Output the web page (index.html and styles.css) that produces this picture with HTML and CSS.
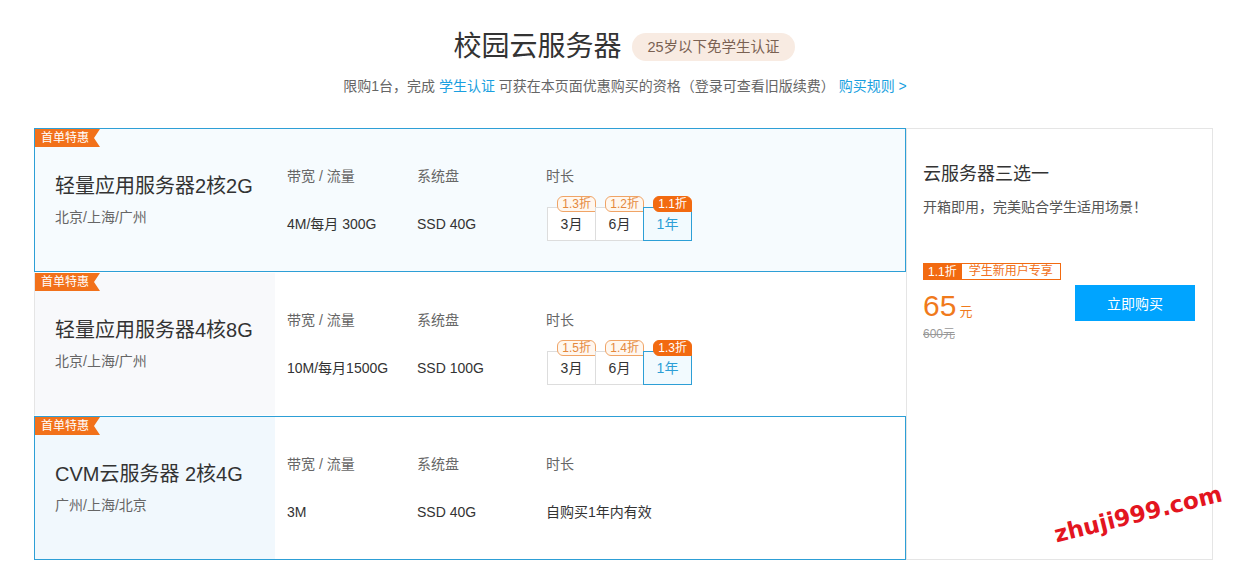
FILE: index.html
```html
<!DOCTYPE html>
<html lang="zh-CN">
<head>
<meta charset="utf-8">
<title>校园云服务器</title>
<link rel="stylesheet" href="styles.css">
</head>
<body>
<div class="header">
  <div class="title-row">
    <h1 class="title">校园云服务器</h1>
    <span class="pill">25岁以下免学生认证</span>
  </div>
  <p class="subtitle">限购1台，完成 <a class="link">学生认证</a> 可获在本页面优惠购买的资格（登录可查看旧版续费） <a class="link">购买规则 &gt;</a></p>
</div>

<div class="board">
  <div class="list">
    <div class="card active full">
      <span class="ribbon">首单特惠</span>
      <div class="card-left">
        <div class="name">轻量应用服务器2核2G</div>
        <div class="region">北京/上海/广州</div>
      </div>
      <div class="card-right">
        <div class="col col-bw">
          <div class="label">带宽 / 流量</div>
          <div class="value">4M/每月 300G</div>
        </div>
        <div class="col col-disk">
          <div class="label">系统盘</div>
          <div class="value">SSD 40G</div>
        </div>
        <div class="col col-dur">
          <div class="label">时长</div>
          <div class="durations">
            <div class="dur"><span class="off">1.3折</span>3月</div>
            <div class="dur"><span class="off">1.2折</span>6月</div>
            <div class="dur sel"><span class="off">1.1折</span>1年</div>
          </div>
        </div>
      </div>
    </div>

    <div class="card gray">
      <span class="ribbon">首单特惠</span>
      <div class="card-left">
        <div class="name">轻量应用服务器4核8G</div>
        <div class="region">北京/上海/广州</div>
      </div>
      <div class="card-right">
        <div class="col col-bw">
          <div class="label">带宽 / 流量</div>
          <div class="value">10M/每月1500G</div>
        </div>
        <div class="col col-disk">
          <div class="label">系统盘</div>
          <div class="value">SSD 100G</div>
        </div>
        <div class="col col-dur">
          <div class="label">时长</div>
          <div class="durations">
            <div class="dur"><span class="off">1.5折</span>3月</div>
            <div class="dur"><span class="off">1.4折</span>6月</div>
            <div class="dur sel"><span class="off">1.3折</span>1年</div>
          </div>
        </div>
      </div>
    </div>

    <div class="card active blue">
      <span class="ribbon">首单特惠</span>
      <div class="card-left">
        <div class="name">CVM云服务器 2核4G</div>
        <div class="region">广州/上海/北京</div>
      </div>
      <div class="card-right">
        <div class="col col-bw">
          <div class="label">带宽 / 流量</div>
          <div class="value">3M</div>
        </div>
        <div class="col col-disk">
          <div class="label">系统盘</div>
          <div class="value">SSD 40G</div>
        </div>
        <div class="col col-dur">
          <div class="label">时长</div>
          <div class="value">自购买1年内有效</div>
        </div>
      </div>
    </div>
  </div>

  <div class="panel">
    <div class="panel-title">云服务器三选一</div>
    <div class="panel-desc">开箱即用，完美贴合学生适用场景！</div>
    <div class="promo"><span class="promo-off">1.1折</span><span class="promo-txt">学生新用户专享</span></div>
    <div class="buy-row">
      <div class="prices">
        <div class="price"><span class="num">65</span><span class="unit">元</span></div>
        <div class="old">600元</div>
      </div>
      <button class="buy">立即购买</button>
    </div>
  </div>
</div>

<div class="watermark">zhuji999.com</div>
</body>
</html>
```

FILE: styles.css
```css
* { box-sizing: border-box; }
html, body { margin: 0; padding: 0; background: #fff; }
body {
  font-family: "Liberation Sans", "Noto Sans CJK SC", sans-serif;
  color: #333;
  width: 1256px;
  height: 574px;
  overflow: hidden;
  position: relative;
}

.header { width: 1248px; padding-top: 27px; text-align: center; }
.title-row { display: flex; justify-content: center; align-items: center; gap: 11px; height: 40px; }
.title { margin: 0; font-size: 28px; font-weight: 400; line-height: 40px; color: #333; }
.pill {
  display: inline-block; height: 28px; line-height: 28px; padding: 0 15px;
  background: #f8ebe2; color: #7a6152; border-radius: 14px; font-size: 14.5px;
}
.subtitle { margin: 9px 0 0; padding-left: 2px; font-size: 14px; line-height: 20px; color: #666; }
.link { color: #1a9fe0; text-decoration: none; }

.board { display: flex; margin: 32px 0 0 34px; width: 1179px; height: 432px; }
.list { width: 872px; display: flex; flex-direction: column; }

.card {
  position: relative;
  display: flex;
  height: 144px;
  border: 1px solid transparent;
  border-left-color: #e5e5e5;
  background: #fff;
}
.card.active { border-color: #2d9fd6; }
.card.full { background: #f6fbfe; }
.card.gray .card-left { background: #f8f9fb; }
.card.blue .card-left { background: #f1f8fd; }

.ribbon {
  position: absolute; left: 0; top: 0;
  height: 18px; line-height: 18px; width: 65px;
  padding-left: 6px;
  font-size: 12px; color: #fff; background: #f2711a;
  clip-path: polygon(0 0, 100% 0, calc(100% - 6px) 50%, 100% 100%, 0 100%);
}

.card-left { width: 240px; padding: 43px 0 0 20px; }
.name { font-size: 20px; line-height: 28px; color: #333; }
.region { margin-top: 7px; font-size: 14px; line-height: 20px; color: #666; }

.card-right { display: flex; flex: 1; padding: 37px 0 0 12px; }
.col { display: flex; flex-direction: column; }
.col-bw { width: 130px; }
.col-disk { width: 129px; }
.col-dur { flex: 1; }
.label { font-size: 14px; line-height: 20px; color: #666; }
.value { margin-top: 28px; font-size: 14px; line-height: 20px; color: #333; }

.durations { display: flex; margin-top: 21px; padding-left: 2px; }
.dur {
  position: relative;
  width: 49px; height: 34px;
  margin-left: -1px;
  border: 1px solid #ddd; background: #fff;
  font-size: 14px; line-height: 32px; text-align: center; color: #333;
}
.dur.sel { border-color: #2d9fd6; background: #f2fafe; color: #2d9fd6; z-index: 1; }
.off {
  position: absolute; top: -12px; right: -1px;
  height: 16px; line-height: 14px; padding: 0 4px;
  font-size: 12px; color: #e4883c; background: #fff7ef;
  border: 1px solid #f0a466; border-radius: 6px 6px 0 6px;
}
.dur.sel .off { background: #f26a10; border-color: #f26a10; color: #fff; }

.panel {
  width: 307px; height: 432px;
  border: 1px solid #e5e5e5;
  padding: 32px 17px 0 16px;
  display: flex; flex-direction: column;
}
.panel-title { font-size: 18px; line-height: 26px; color: #333; }
.panel-desc { margin-top: 10px; font-size: 14px; line-height: 20px; color: #555; }
.promo { display: flex; margin-top: 46px; height: 17px; font-size: 12px; line-height: 15px; }
.promo-off { background: #f26a10; color: #fff; padding: 1px 4px 0; border: 1px solid #f26a10; }
.promo-txt { border: 1px solid #f26a10; border-left: none; color: #f07020; padding: 0 7px; }
.buy-row { display: flex; justify-content: space-between; align-items: flex-start; margin-top: 5px; }
.prices { padding-top: 4px; }
.price { line-height: 34px; color: #f07a1c; }
.num { font-size: 30px; }
.unit { font-size: 13px; margin-left: 3px; }
.old { margin-top: -3px; font-size: 12px; line-height: 16px; color: #999; text-decoration: line-through; }
.buy {
  width: 120px; height: 36px; border: none; background: #00a4ff; color: #fff;
  font-family: inherit; font-size: 14px; cursor: pointer;
}

.watermark {
  position: absolute; left: 1052px; top: 498px;
  font-family: "DejaVu Sans", sans-serif; font-weight: bold;
  font-size: 23px; line-height: 32px; color: #e3151f;
  transform: rotate(-14deg);
  transform-origin: center;
  white-space: nowrap;
}
```
